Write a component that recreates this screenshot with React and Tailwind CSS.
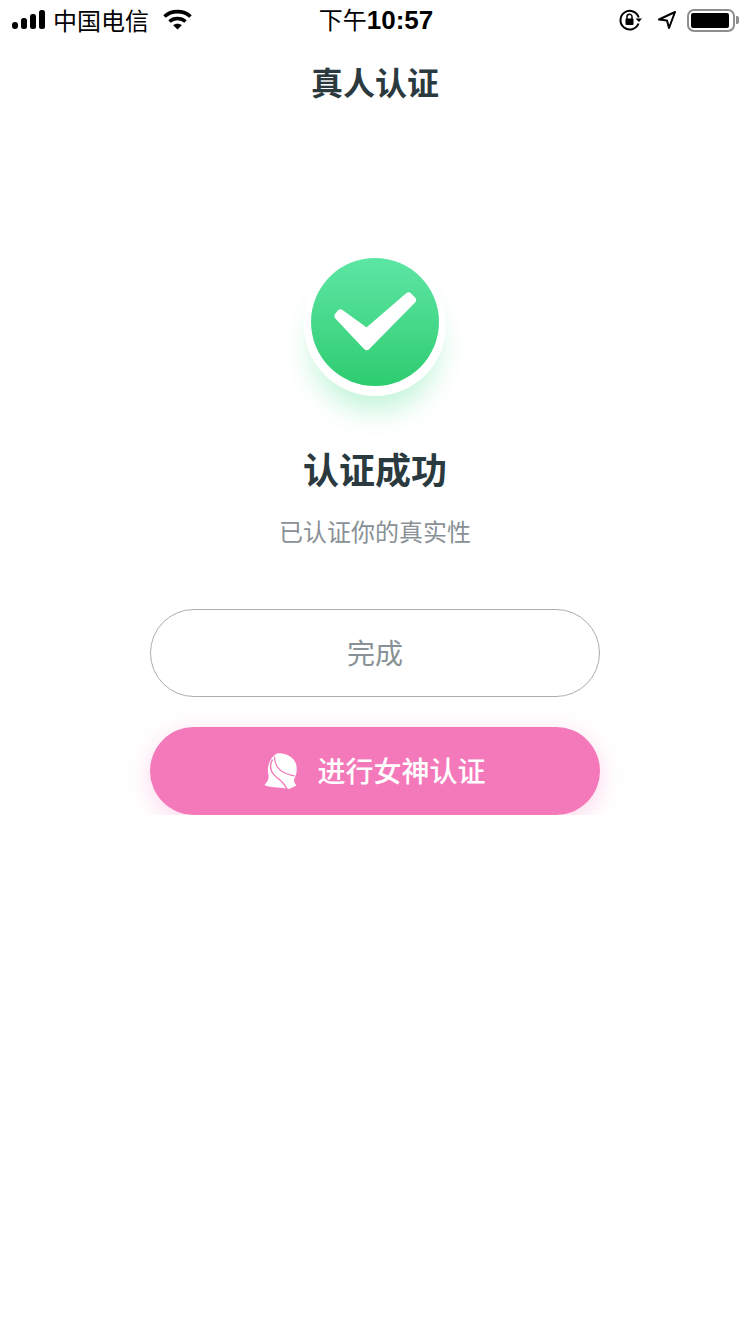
export default function App() {
  const cjk = { fontFamily: '"Noto Sans CJK SC", sans-serif' };
  return (
    <div className="w-[750px] h-[1334px] bg-white overflow-hidden" style={cjk}>
      <div className="h-[815px] overflow-hidden">
        <div className="relative h-10 flex items-center justify-between pl-3 pr-[11px] text-black">
          <div className="flex items-center">
            <svg width="34" height="20" viewBox="0 0 34 20" fill="#000">
              <rect x="0" y="12" width="6" height="7" rx="3" />
              <rect x="9" y="8" width="6" height="11" rx="2.5" />
              <rect x="18" y="4" width="6" height="15" rx="2.5" />
              <rect x="27" y="0" width="6" height="19" rx="2.5" />
            </svg>
            <span className="ml-[7px] text-[24px] leading-none">中国电信</span>
            <svg className="ml-[14px]" width="29" height="22" viewBox="0 0 29 22" fill="none" stroke="#000" strokeWidth="3.6">
              <path d="M1.5 7.5C8.5 1 20.5 1 27.5 7.5" />
              <path d="M6.5 12.5C11 8.5 18 8.5 22.5 12.5" />
              <path d="M14.5 20.5L10.2 16.2C12.5 14.2 16.5 14.2 18.8 16.2Z" fill="#000" stroke="none" />
            </svg>
          </div>
          <div className="flex items-center">
            <svg width="24" height="22" viewBox="0 0 24 22" fill="none" stroke="#000">
              <path d="M19.5 14.5A9.3 9.3 0 1 1 19.7 8.5" strokeWidth="2" />
              <path d="M16.5 9.5h6.5l-3 3.5z" fill="#000" stroke="none" />
              <rect x="6.5" y="9.5" width="8" height="6.5" rx="1" fill="#000" stroke="none" />
              <path d="M8 10V7.7a2.5 2.5 0 0 1 5 0V10" strokeWidth="1.5" />
            </svg>
            <svg className="ml-[14px]" width="20" height="20" viewBox="0 0 20 20" fill="none" stroke="#000" strokeWidth="2" strokeLinejoin="round">
              <path d="M18 2L2 9.5L10 10.5L12 18Z" />
            </svg>
            <div className="ml-[10px] w-[48px] h-[23px] border-2 border-[#8e8e8e] rounded-[7px] p-[2px]">
              <div className="w-[38px] h-[15px] bg-black rounded-[2px]" />
            </div>
            <div className="ml-[1px] w-[3px] h-[8px] bg-[#8e8e8e] rounded-r-[2px]" />
          </div>
          <div className="absolute left-0 right-0 top-0 h-10 flex items-center justify-center text-[24px] leading-none pointer-events-none pl-[2px]">
            <span>下午<span className="text-[26px] font-bold" style={{ fontFamily: '"Liberation Sans", sans-serif' }}>10:57</span></span>
          </div>
        </div>

        <div className="h-[88px] flex items-center justify-center text-[32px] font-bold text-[#2b3a3f] pb-[7px]">
          真人认证
        </div>

        <div className="flex flex-col items-center pt-[126px]">
          <div className="w-[142px] h-[142px] rounded-full bg-white flex justify-center pt-[4px] shadow-[0_22px_28px_-8px_rgba(60,220,130,0.32)]">
            <div className="w-[128px] h-[128px] rounded-full bg-gradient-to-b from-[#5ce6a4] to-[#2dcc70]">
              <svg width="128" height="128" viewBox="0 0 128 128" fill="#fff" stroke="#fff" strokeWidth="8" strokeLinejoin="round">
                <path d="M29.5 55.5L27.5 58L55.7 88L101 42L97.5 38.5L55.7 74.5Z" />
              </svg>
            </div>
          </div>
          <div className="mt-[47px] text-[36px] leading-[50px] font-bold text-[#2b3a3f]">认证成功</div>
          <div className="mt-[18px] mb-[1px] text-[24px] leading-[40px] text-[#899196]">已认证你的真实性</div>
          <div className="mt-[57px] w-[450px] h-[88px] rounded-full border border-[#adadad] flex items-center justify-center text-[28px] text-[#899196] pb-[2px]">
            完成
          </div>
          <div className="mt-[30px] w-[450px] h-[88px] rounded-full bg-[#f479ba] shadow-[0_6px_24px_rgba(245,121,187,0.3)] flex items-center justify-center text-white text-[28px] font-medium">
            <svg className="mr-[20px]" width="33" height="36" viewBox="0 0 33 36" fill="#fff">
              <path d="M13 .5C21-.5 31 4 32.5 13C33 18 32.5 22 30 26.5C30 29 31 31 32.5 32.5L25 36L22 35.5C14 34 6 35 .5 32C2 30 4 28 4.500 25C5 22 3.500 20 4 15C4.500 9 8 3 13 .5Z" />
              <path d="M8.500 6.500C6.500 10 6 15 8 19C10 23 14 25 17 28C19.500 30 21 33 23 36" fill="none" stroke="#f479ba" strokeWidth="1.500" />
              <path d="M10.500 3.500C10.500 9 13 15 18 18.500C22 21 26 22 31 23" fill="none" stroke="#f479ba" strokeWidth="1.200" />
            </svg>
            <span className="pb-[2px]">进行女神认证</span>
          </div>
        </div>
      </div>
    </div>
  );
}
